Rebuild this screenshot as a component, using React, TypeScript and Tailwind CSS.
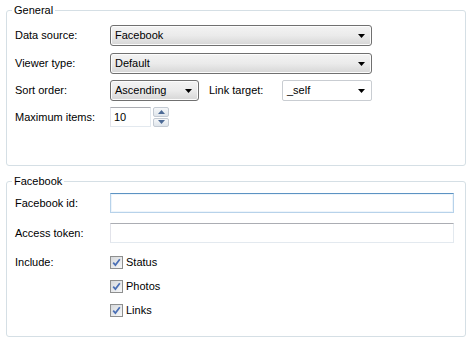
import React from 'react';

const font = { fontFamily: '"Liberation Sans", Arial, sans-serif' };

function Arrow() {
  return (
    <svg width="7" height="4" viewBox="0 0 7 4" className="shrink-0">
      <path d="M0 0h7L3.5 4z" fill="#000" />
    </svg>
  );
}

function Select({ value, className }: { value: string; className: string }) {
  return (
    <div
      className={`flex items-center justify-between h-[21px] pl-[4px] pr-[6px] rounded-[3px] border border-[#707070] bg-gradient-to-b from-[#f3f3f3] via-[#ebebeb] to-[#d6d6d6] shadow-[inset_0_0_0_1px_#fcfcfc] ${className}`}
    >
      <span>{value}</span>
      <Arrow />
    </div>
  );
}

function Row({ label, children, className = '' }: { label: string; children: React.ReactNode; className?: string }) {
  return (
    <div className={`flex items-center ${className}`}>
      <span className="w-[95px] shrink-0">{label}</span>
      {children}
    </div>
  );
}

function Check({ label, className = '' }: { label: string; className?: string }) {
  return (
    <div className={`flex items-center gap-[3px] h-[13px] ${className}`}>
      <div className="w-[13px] h-[13px] border border-[#8e8f8f] bg-gradient-to-br from-[#d6d8db] to-[#f7f8f9] flex items-center justify-center">
        <svg width="9" height="9" viewBox="0 0 9 9">
          <path d="M1.2 4.6l2.2 2.5L7.8 1.2" stroke="#4a6fb5" strokeWidth="1.7" fill="none" />
        </svg>
      </div>
      <span>{label}</span>
    </div>
  );
}

export default function App() {
  return (
    <div className="w-[473px] h-[343px] bg-white text-[11px] text-black pl-[6px] pr-[7px] pt-[3px]" style={font}>
      <fieldset className="h-[163px] border border-[#d5dfe5] rounded-[3px] px-[8px]">
        <legend className="-ml-[3px] px-[2px] leading-[14px]">General</legend>
        <Row label="Data source:" className="mt-[8px]">
          <Select value="Facebook" className="w-[262px]" />
        </Row>
        <Row label="Viewer type:" className="mt-[7px]">
          <Select value="Default" className="w-[262px]" />
        </Row>
        <Row label="Sort order:" className="mt-[6px]">
          <Select value="Ascending" className="w-[89px]" />
          <span className="ml-[10px] w-[73px]">Link target:</span>
          <div className="flex items-center justify-between w-[90px] h-[21px] pl-[4px] pr-[6px] rounded-[2px] border border-[#c9cdd2] bg-white">
            <span>_self</span>
            <Arrow />
          </div>
        </Row>
        <Row label="Maximum items:" className="mt-[6px]">
          <div className="w-[41px] h-[20px] border border-[#abadb3] border-r-[#e3e9ef] border-b-[#e3e9ef] border-l-[#e2e3ea] flex items-center pl-[3px]">
            10
          </div>
          <div className="ml-[2px] w-[16px] h-[20px] flex flex-col gap-[1px]">
            <div className="flex-1 border border-[#c3cad3] rounded-[2px] bg-gradient-to-b from-[#f6f8fa] to-[#dfe5eb] flex items-center justify-center">
              <svg width="7" height="4" viewBox="0 0 7 4"><path d="M0 4h7L3.5 0z" fill="#4c6a96" /></svg>
            </div>
            <div className="flex-1 border border-[#c3cad3] rounded-[2px] bg-gradient-to-b from-[#f6f8fa] to-[#dfe5eb] flex items-center justify-center">
              <svg width="7" height="4" viewBox="0 0 7 4"><path d="M0 0h7L3.5 4z" fill="#4c6a96" /></svg>
            </div>
          </div>
        </Row>
      </fieldset>

      <fieldset className="mt-[8px] h-[163px] border border-[#d5dfe5] rounded-[3px] px-[8px]">
        <legend className="-ml-[3px] px-[2px] leading-[14px]">Facebook</legend>
        <Row label="Facebook id:" className="mt-[5px]">
          <div className="w-[344px] h-[20px] border border-[#b7d2ea] border-t-[#5c93c3] shadow-[inset_0_0_0_1px_#eef5fb]" />
        </Row>
        <Row label="Access token:" className="mt-[10px]">
          <div className="w-[344px] h-[20px] border border-[#e3e9ef] border-t-[#abadb3] border-l-[#e2e3ea]" />
        </Row>
        <div className="flex mt-[13px]">
          <span className="w-[95px] shrink-0 leading-[13px]">Include:</span>
          <div className="flex flex-col gap-[11px]">
            <Check label="Status" />
            <Check label="Photos" />
            <Check label="Links" />
          </div>
        </div>
      </fieldset>
    </div>
  );
}
